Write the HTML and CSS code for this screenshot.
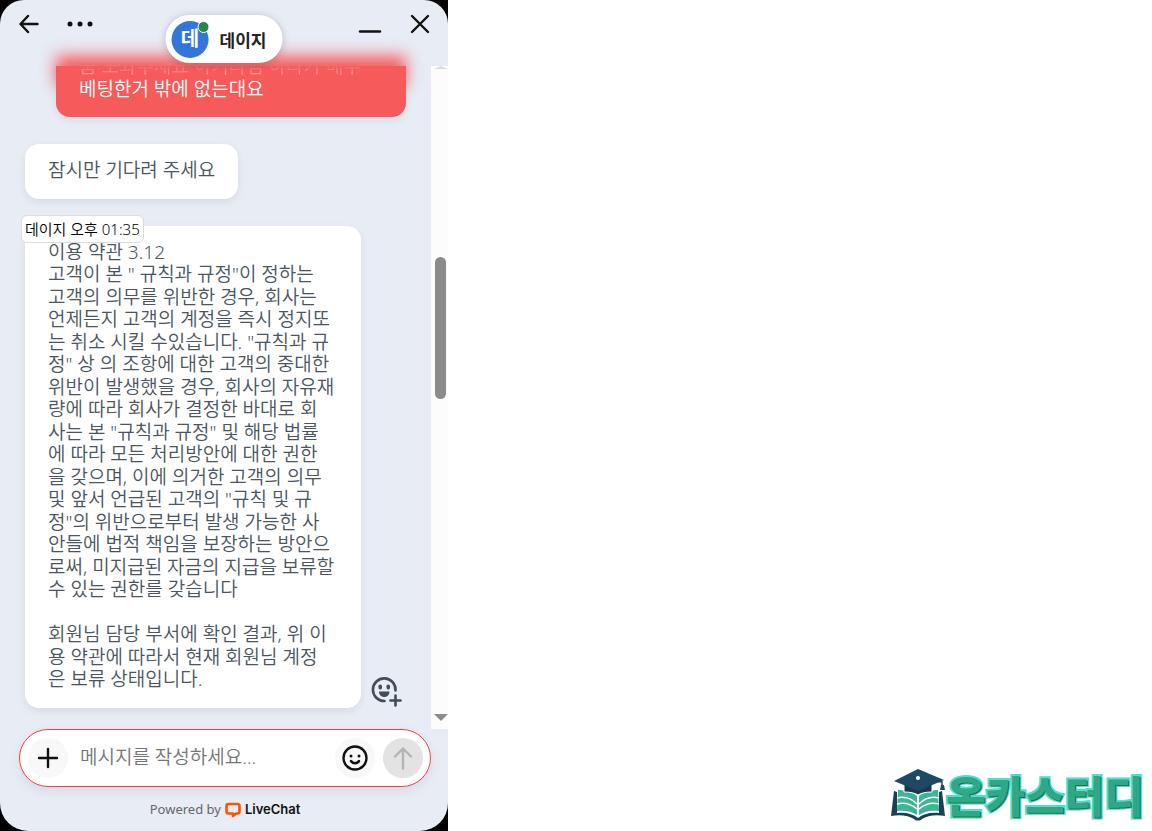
FILE: index.html
```
<!DOCTYPE html>
<html lang="ko">

<head>
    <meta charset="UTF-8">
    <meta name="viewport" content="width=device-width, initial-scale=1.0">
    <title>LiveChat</title>
    <link rel="stylesheet" href="styles.css">
</head>

<body>
    <main class="chat-frame">
        <div class="chat">
            <header class="chat-header">
                <div class="header-group">
                    <button type="button" class="icon-btn" aria-label="뒤로">
                        <svg width="20" height="20" viewBox="0 0 20 20"><path d="M18.500 10H2M9 2l-7.500 8L9 18" /></svg>
                    </button>
                    <button type="button" class="icon-btn more" aria-label="메뉴">
                        <svg width="26" height="20" viewBox="0 0 26 20"><circle cx="3" cy="10" r="2.500" /><circle cx="13" cy="10" r="2.500" /><circle cx="23" cy="10" r="2.500" /></svg>
                    </button>
                </div>
                <div class="header-group">
                    <button type="button" class="icon-btn" aria-label="최소화">
                        <svg width="24" height="20" viewBox="0 0 24 20"><path d="M2 17.500h20" /></svg>
                    </button>
                    <button type="button" class="icon-btn" aria-label="닫기">
                        <svg width="20" height="20" viewBox="0 0 20 20"><path d="M2 2l16 16M18 2L2 18" /></svg>
                    </button>
                </div>
                <div class="agent">
                    <span class="avatar">데<i class="online"></i></span>
                    <span class="agent-name">데이지</span>
                </div>
            </header>

            <div class="chat-body">
                <section class="messages">
                    <div class="bubble mine">
                        <p><span class="faded">움 도와주세요 하기라임 하다가 매두</span><br>베팅한거 밖에 없는대요</p>
                    </div>
                    <div class="bubble">
                        <p>잠시만 기다려 주세요</p>
                    </div>
                    <div class="message-row">
                        <div class="bubble long">
                            <span class="time">데이지 오후 01:35</span>
                            <p>이용 약관 3.12<br>
                                고객이 본 " 규칙과 규정"이 정하는<br>
                                고객의 의무를 위반한 경우, 회사는<br>
                                언제든지 고객의 계정을 즉시 정지또<br>
                                는 취소 시킬 수있습니다. "규칙과 규<br>
                                정" 상 의 조항에 대한 고객의 중대한<br>
                                위반이 발생했을 경우, 회사의 자유재<br>
                                량에 따라 회사가 결정한 바대로 회<br>
                                사는 본 "규칙과 규정" 및 해당 법률<br>
                                에 따라 모든 처리방안에 대한 권한<br>
                                을 갖으며, 이에 의거한 고객의 의무<br>
                                및 앞서 언급된 고객의 "규칙 및 규<br>
                                정"의 위반으로부터 발생 가능한 사<br>
                                안들에 법적 책임을 보장하는 방안으<br>
                                로써, 미지급된 자금의 지급을 보류할<br>
                                수 있는 권한를 갖습니다<br>
                                <br>
                                회원님 담당 부서에 확인 결과, 위 이<br>
                                용 약관에 따라서 현재 회원님 계정<br>
                                은 보류 상태입니다.</p>
                        </div>
                        <button type="button" class="react" aria-label="반응 추가">
                            <svg width="32" height="32" viewBox="0 0 32 32">
                                <path class="line" d="M24.500 14.500A11.300 11.300 0 1 0 13.500 25" />
                                <rect x="7.500" y="8.500" width="3.500" height="5" rx="1.700" />
                                <rect x="15.500" y="8.500" width="3.500" height="5" rx="1.700" />
                                <path d="M8 15.500h10.500c0 3.400-2.200 5.500-5.200 5.500S8 18.900 8 15.500z" />
                                <path class="line" d="M24.500 19.500v10M19.500 24.500h10" />
                            </svg>
                        </button>
                    </div>
                </section>
                <div class="scrollbar">
                    <span class="arrow up"></span>
                    <span class="thumb"></span>
                    <span class="arrow down"></span>
                </div>
            </div>

            <footer class="chat-footer">
                <form class="composer">
                    <button type="button" class="round" aria-label="첨부">
                        <svg width="22" height="22" viewBox="0 0 22 22"><path d="M11 2v18M2 11h18" /></svg>
                    </button>
                    <input type="text" class="message-input" aria-label="메시지" placeholder="메시지를 작성하세요...">
                    <button type="button" class="round" aria-label="이모지">
                        <svg width="28" height="28" viewBox="0 0 28 28">
                            <circle cx="14" cy="14" r="11.500" />
                            <path d="M10 17c1 1.600 2.400 2.300 4 2.300s3-.7 4-2.300" />
                            <circle class="dot" cx="10" cy="12" r="1.500" />
                            <circle class="dot" cx="18" cy="12" r="1.500" />
                        </svg>
                    </button>
                    <button type="submit" class="round send" aria-label="보내기">
                        <svg width="22" height="24" viewBox="0 0 22 24"><path d="M11 22.500V2.500M3 10.500l8-8 8 8" /></svg>
                    </button>
                </form>
                <div class="powered">
                    <span>Powered by</span>
                    <svg width="16" height="16" viewBox="0 0 16 16"><path d="M3.500 2h9q2 0 2 2v5.500q0 2-2 2h-1.500L8 14v-2.500H3.500q-2 0-2-2V4q0-2 2-2z" /></svg>
                    <b>LiveChat</b>
                </div>
            </footer>
        </div>
    </main>

    <div class="brand">
        <svg width="56" height="54" viewBox="0 0 56 54">
            <path fill="#1b3f58" d="M4 22L1 47c10-2 18 0 23 3 2 2 6 2 8 0 5-3 13-5 23-3l-3-25-3 1v20H7V23z" />
            <path fill="#fff" d="M7 20h42v24c-9-1-16 1-21 5-5-4-12-6-21-5z" />
            <path fill="#3cb697" d="M8 21c8 0 14 2 19 6v19c-6-4-12-5-20-4zM48 21c-8 0-14 2-19 6v19c6-4 12-5 20-4z" />
            <path fill="none" stroke="#fff" stroke-width="1.500" d="M7 29c8-2 14 0 20 6M7 35c8-2 14 0 20 5M49 29c-8-2-14 0-20 6M49 35c-8-2-14 0-20 5M28 26v22" />
            <path fill="#173850" stroke="#fff" d="M14 15v8c6 0 11 1 14 3 3-2 8-3 14-3v-8z" />
            <path fill="#1d4964" d="M28 0l26 11-26 11L4 12z" />
            <path fill="none" stroke="#1d4964" stroke-width="1.500" d="M29 10l23 3v6" />
            <path fill="#1d4964" d="M51 16h3l1 5h-5z" />
            <circle cx="28" cy="9" r="2" fill="#fff" />
        </svg>
        <span class="brand-name">온카스터디</span>
    </div>
</body>

</html>
```
FILE: styles.css
```
* {
    box-sizing: border-box;
}

body {
    margin: 0;
    min-height: 100vh;
    display: flex;
    justify-content: space-between;
    align-items: flex-end;
    background: #fff;
    font-family: "Noto Sans", "Noto Sans CJK KR", sans-serif;
}

button {
    padding: 0;
    border: 0;
    background: none;
    cursor: pointer;
}

svg {
    display: block;
}

p {
    margin: 0;
}

.chat-frame {
    width: 448px;
    height: 100vh;
    background: #000;
}

.chat {
    height: 100%;
    display: flex;
    flex-direction: column;
    overflow: hidden;
    border-radius: 24px 24px 28px 28px;
    background: #e7ecf5;
}

/* header */
.chat-header {
    position: relative;
    z-index: 2;
    flex: none;
    display: flex;
    justify-content: space-between;
    height: 66px;
    padding: 14px 18px 0 19px;
}

.header-group {
    display: flex;
    align-items: flex-start;
    gap: 28px;
}

.icon-btn svg {
    fill: none;
    stroke: #111;
    stroke-width: 2.4;
    stroke-linecap: round;
    stroke-linejoin: round;
}

.more svg {
    fill: #111;
    stroke: none;
}

.agent {
    position: absolute;
    top: 15px;
    left: 50%;
    transform: translateX(-50%);
    display: flex;
    align-items: center;
    gap: 11px;
    height: 48px;
    padding: 0 16px 0 6px;
    border-radius: 24px;
    background: #fff;
    box-shadow: 0 1px 8px rgba(0, 0, 0, 0.2);
}

.avatar {
    position: relative;
    width: 37px;
    height: 37px;
    border-radius: 50%;
    background: #3276dc;
    color: #fff;
    font-size: 20px;
    font-weight: 700;
    line-height: 36px;
    text-align: center;
}

.online {
    position: absolute;
    top: 0;
    right: -1px;
    width: 12px;
    height: 12px;
    border: 1px solid #fff;
    border-radius: 50%;
    background: #268750;
}

.agent-name {
    color: #222;
    font-size: 17px;
    font-weight: 700;
    white-space: nowrap;
}

/* conversation */
.chat-body {
    flex: 1;
    display: flex;
    min-height: 0;
}

.messages {
    flex: 1;
    display: flex;
    flex-direction: column;
    align-items: flex-start;
    gap: 27px;
    padding: 0 25px;
}

.bubble {
    position: relative;
    padding: 15px 23px 17px;
    border-radius: 14px;
    background: #fff;
    box-shadow: 0 3px 8px rgba(0, 0, 0, 0.08);
    color: #4a5560;
    font-size: 19px;
    font-weight: 350;
    line-height: 1.185;
    white-space: nowrap;
}

.mine {
    align-self: flex-end;
    display: flex;
    align-items: flex-end;
    width: 350px;
    height: 51px;
    border-radius: 0 0 14px 14px;
    background: #f65b5b;
    color: #fff;
}

/* soft top edge where the message scrolls under the header */
.mine::before {
    content: "";
    position: absolute;
    top: -10px;
    left: 0;
    right: 0;
    height: 30px;
    background: #f65b5b;
    filter: blur(8px);
}

.mine p {
    position: relative;
}

.faded {
    background: linear-gradient(transparent 45%, #fbb 100%);
    -webkit-background-clip: text;
    background-clip: text;
    color: transparent;
}

.message-row {
    display: flex;
    align-items: flex-end;
    gap: 10px;
}

.long {
    width: 336px;
}

.time {
    position: absolute;
    top: -11px;
    left: -4px;
    padding: 0 3px;
    border: 1px solid #ddd;
    border-radius: 6px;
    background: #fff;
    color: #000;
    font-size: 15px;
    line-height: 26px;
}

.react svg {
    fill: #424d57;
}

.react .line {
    fill: none;
    stroke: #424d57;
    stroke-width: 2.6;
    stroke-linecap: round;
}

.scrollbar {
    display: flex;
    flex-direction: column;
    align-items: center;
    width: 17px;
    padding: 0 0 8px 2px;
    background: #fcfcfc;
}

.thumb {
    width: 11px;
    height: 142px;
    margin: 188px 0 auto;
    border-radius: 6px;
    background: #8b8b8b;
}

.arrow {
    border: 7px solid transparent;
}

.up {
    height: 3px;
    border-top: 0;
    border-bottom: 3px solid #dadde0;
}

.down {
    border-bottom: 0;
    border-top-color: #8b8b8b;
}

/* composer */
.chat-footer {
    flex: none;
    padding: 0 17px 12px 19px;
}

.composer {
    display: flex;
    align-items: center;
    gap: 8px;
    height: 58px;
    padding: 0 7px 0 8px;
    border: 1px solid #f43f3f;
    border-radius: 29px;
    background: #fff;
    box-shadow: 0 4px 12px rgba(0, 0, 0, 0.08);
}

.round {
    flex: none;
    display: flex;
    align-items: center;
    justify-content: center;
    width: 40px;
    height: 40px;
    border-radius: 50%;
    background: #f8f8f8;
}

.round svg {
    fill: none;
    stroke: #111;
    stroke-width: 2.4;
    stroke-linecap: round;
    stroke-linejoin: round;
}

.round .dot {
    fill: #111;
    stroke: none;
}

.send {
    background: #e3e3e3;
}

.send svg {
    stroke: #b4b4b4;
}

.message-input {
    flex: 1;
    min-width: 0;
    padding: 0 4px 2px;
    border: 0;
    outline: 0;
    background: none;
    font-family: inherit;
    font-size: 19px;
}

.message-input::placeholder {
    color: #757575;
    font-weight: 350;
}

.powered {
    display: flex;
    align-items: center;
    justify-content: center;
    gap: 4px;
    margin-top: 13px;
    color: #666;
    font-size: 13px;
    line-height: 19px;
}

.powered svg {
    fill: none;
    stroke: #ff5100;
    stroke-width: 2.6;
    stroke-linejoin: round;
}

.powered b {
    color: #111;
    font-family: Inter, sans-serif;
    font-size: 13px;
    font-weight: 600;
}

/* site logo */
.brand {
    display: flex;
    align-items: flex-start;
    padding: 0 8px 8px 0;
}

.brand-name {
    color: #2fa888;
    font-family: "Noto Sans CJK KR", sans-serif;
    font-size: 43px;
    font-weight: 900;
    line-height: 50px;
    -webkit-text-stroke: 4px #4fe0cc;
    paint-order: stroke fill;
    text-shadow: 1px 1px 0 #2b6b45;
}
```
